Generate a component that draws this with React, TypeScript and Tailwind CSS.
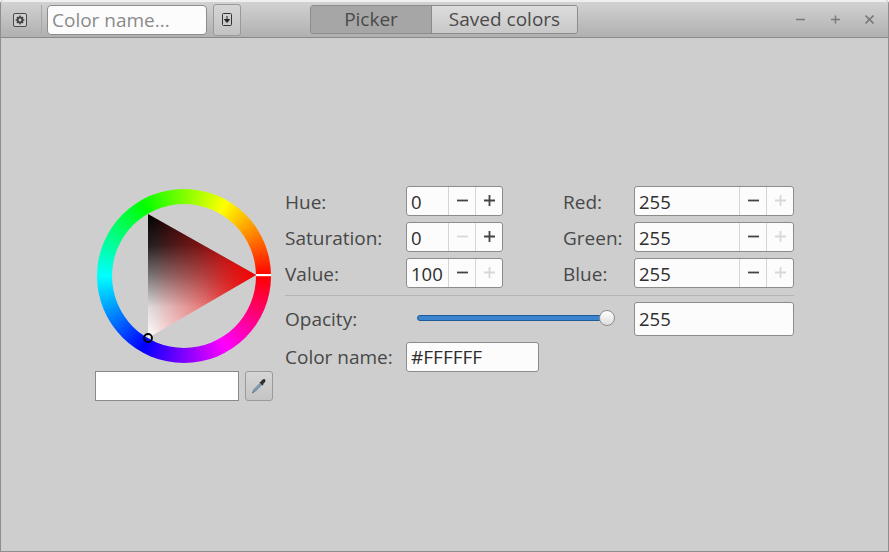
import React from "react";

function Spin({ value, w, minusOff, plusOff }: { value: string; w: string; minusOff?: boolean; plusOff?: boolean }) {
  return (
    <div className={`flex h-[30px] ${w} rounded-[3px] border border-[#8c8c8c] bg-[#fcfcfc] text-[#2e2e2e]`}>
      <div className="flex-1 pl-1 text-[18.5px] leading-[30px] whitespace-nowrap">{value}</div>
      <div className={`flex w-[27px] items-center justify-center border-l border-[#d4d4d4] ${minusOff ? "text-[#d8d8d8]" : "text-[#444444]"}`}>
        <svg width="11" height="11" viewBox="0 0 11 11"><path d="M0 5.5H11" stroke="currentColor" strokeWidth="1.8" /></svg>
      </div>
      <div className={`flex w-[27px] items-center justify-center border-l border-[#d4d4d4] ${plusOff ? "text-[#d8d8d8]" : "text-[#444444]"}`}>
        <svg width="11" height="11" viewBox="0 0 11 11"><path d="M0 5.5H11M5.5 0V11" stroke="currentColor" strokeWidth="1.8" /></svg>
      </div>
    </div>
  );
}

function Label({ children }: { children: React.ReactNode }) {
  return <div className="flex h-[30px] items-center whitespace-nowrap pt-[3px] text-[#484848]">{children}</div>;
}

function Wheel() {
  return (
    <div className="relative mx-auto h-[174px] w-[174px] rounded-full bg-[conic-gradient(from_90deg,#ff0000,#ff00ff,#0000ff,#00ffff,#00ff00,#ffff00,#ff0000)]">
      <div className="absolute inset-[15px] rounded-full bg-[#cecece]" />
      <svg className="absolute left-0 top-0" width="174" height="174" viewBox="0 0 174 174">
        <defs>
          <linearGradient id="sat" gradientUnits="userSpaceOnUse" x1="51" y1="25" x2="51" y2="149">
            <stop offset="0" stopColor="#000000" />
            <stop offset="0.25" stopColor="#202020" />
            <stop offset="0.5" stopColor="#787878" />
            <stop offset="0.75" stopColor="#dcdcdc" />
            <stop offset="1" stopColor="#ffffff" />
          </linearGradient>
          <linearGradient id="hue" gradientUnits="userSpaceOnUse" x1="159" y1="86" x2="51" y2="86">
            <stop offset="0" stopColor="#f80000" stopOpacity="1" />
            <stop offset="0.25" stopColor="#f80000" stopOpacity="0.74" />
            <stop offset="0.5" stopColor="#f80000" stopOpacity="0.44" />
            <stop offset="1" stopColor="#f80000" stopOpacity="0" />
          </linearGradient>
        </defs>
        <polygon points="51,25 159,86 51,149" fill="url(#sat)" />
        <polygon points="51,25 159,86 51,149" fill="url(#hue)" />
        <rect x="159" y="85" width="15" height="2.2" fill="#ffffff" />
        <circle cx="51" cy="149" r="4" fill="none" stroke="#000000" strokeWidth="1.8" />
      </svg>
    </div>
  );
}

export default function App() {
  return (
    <div className="flex h-[552px] w-[889px] flex-col overflow-hidden rounded-t-[4px] border-x border-b border-[#8e8e8e] bg-[#cecece] font-['Open_Sans','Noto_Sans',sans-serif] text-[19px]">
      <header className="flex h-[38px] shrink-0 items-center border-b border-[#8a8a8a] border-t-2 border-t-[#f0f0f0] bg-gradient-to-b from-[#d2d2d2] to-[#b0b0b0]">
        <div className="ml-[11px] flex w-[16px] justify-center">
          <svg width="14" height="14" viewBox="0 0 14 14">
            <rect x="0.5" y="0.5" width="13" height="13" rx="1.5" fill="#cfcfcf" stroke="#4a4a4a" />
            <circle cx="7" cy="7" r="2.4" fill="none" stroke="#444444" strokeWidth="2" />
            <path d="M7 2.6V4.4M7 9.6V11.4M2.6 7H4.4M9.6 7H11.4M3.9 3.9L5.2 5.2M8.8 8.8L10.1 10.1M10.1 3.9L8.8 5.2M5.2 8.8L3.9 10.1" stroke="#444444" strokeWidth="1.4" />
          </svg>
        </div>
        <div className="ml-[13px] h-[30px] w-px bg-[#a8a8a8]" />
        <div className="ml-[5px] h-[30px] w-[160px] rounded-[4px] border border-[#8c8c8c] bg-[#fcfcfc] pl-1 leading-[28px] text-[#8a8a8a]">Color name...</div>
        <div className="ml-[6px] flex h-[32px] w-[28px] items-center justify-center rounded-[3px] border border-[#9a9a9a] bg-gradient-to-b from-[#d6d6d6] to-[#c2c2c2]">
          <svg width="10" height="13" viewBox="0 0 10 13">
            <rect x="0.5" y="0.5" width="9" height="12" rx="1" fill="none" stroke="#333333" />
            <path d="M5 3V6.5M2.5 6.5H7.5L5 9.5Z" fill="#222222" stroke="#222222" />
          </svg>
        </div>
        <div className="ml-[69px] flex h-[29px] w-[268px] overflow-hidden rounded-[3px] border border-[#8c8c8c] text-[#4a4a4a]">
          <div className="flex w-[121px] items-center justify-center border-r border-[#8c8c8c] bg-[#a6a6a6]">Picker</div>
          <div className="flex flex-1 items-center justify-center bg-gradient-to-b from-[#dcdcdc] to-[#c8c8c8]">Saved colors</div>
        </div>
        <div className="ml-[218px] flex items-center text-[#7a7a7a]">
          <svg width="9" height="9" viewBox="0 0 9 9"><path d="M0 4.5H9" stroke="currentColor" strokeWidth="1.5" /></svg>
          <svg className="ml-[26px]" width="9" height="9" viewBox="0 0 9 9"><path d="M0 4.5H9M4.5 0.5V8.5" stroke="currentColor" strokeWidth="1.5" /></svg>
          <svg className="ml-[25px]" width="9" height="9" viewBox="0 0 9 9"><path d="M0.5 0.5L8.5 8.5M8.5 0.5L0.5 8.5" stroke="currentColor" strokeWidth="1.6" /></svg>
        </div>
      </header>
      <main className="flex flex-1 items-center justify-center gap-[12px]">
        <div className="flex w-[178px] flex-col gap-[8px] pt-px">
          <Wheel />
          <div className="flex gap-[6px]">
            <div className="h-[30px] w-[144px] border border-[#8a8a8a] bg-white" />
            <div className="flex h-[30px] w-[28px] items-center justify-center rounded-[3px] border border-[#9a9a9a] bg-gradient-to-b from-[#d6d6d6] to-[#c4c4c4]">
              <svg width="16" height="16" viewBox="0 0 16 16">
                <path d="M1.5 15L3 11.5L9 5.5L10.5 7L4.5 13Z" fill="#7fa6c4" stroke="#5a6e7e" strokeWidth="0.8" />
                <path d="M8.5 4.5L11.5 7.5L12.5 6.5L12 6C14.5 4.5 15 2.5 14 1.5C13 0.5 11 1.5 9.8 4L9.5 3.5Z" fill="#2e2e2e" />
              </svg>
            </div>
          </div>
        </div>
        <div className="mb-[32px] w-[509px]">
          <div className="grid grid-cols-[121px_97px_60px_71px_160px] gap-y-[6px]">
            <Label>Hue:</Label>
            <Spin value="0" w="w-[97px]" />
            <div />
            <Label>Red:</Label>
            <Spin value="255" w="w-[160px]" plusOff />
            <Label>Saturation:</Label>
            <Spin value="0" w="w-[97px]" minusOff />
            <div />
            <Label>Green:</Label>
            <Spin value="255" w="w-[160px]" plusOff />
            <Label>Value:</Label>
            <Spin value="100" w="w-[97px]" plusOff />
            <div />
            <Label>Blue:</Label>
            <Spin value="255" w="w-[160px]" plusOff />
          </div>
          <div className="mt-[7px] h-px bg-[#b4b4b4]" />
          <div className="mt-[6px] flex h-[34px] items-center">
            <div className="w-[132px] pt-[2px] leading-[29px] text-[#484848]">Opacity:</div>
            <div className="relative mb-[2px] h-[6px] w-[190px] rounded-full border border-[#1f5a99] bg-[#3a84d0]">
              <div className="absolute right-[-9px] top-[-6px] h-[16px] w-[16px] rounded-full border border-[#8c8c8c] bg-gradient-to-b from-white to-[#dcdcdc]" />
            </div>
            <div className="ml-[27px] h-[34px] w-[160px] rounded-[3px] border border-[#8c8c8c] bg-[#fcfcfc] pl-1 text-[18.5px] leading-[32px] text-[#2e2e2e]">255</div>
          </div>
          <div className="mt-[6px] flex h-[30px] items-center">
            <div className="w-[121px] whitespace-nowrap pt-[2px] text-[#484848]">Color name:</div>
            <div className="h-[30px] w-[133px] rounded-[3px] border border-[#8c8c8c] bg-[#fcfcfc] pl-1 leading-[28px] text-[#2e2e2e]">#FFFFFF</div>
          </div>
        </div>
      </main>
    </div>
  );
}
